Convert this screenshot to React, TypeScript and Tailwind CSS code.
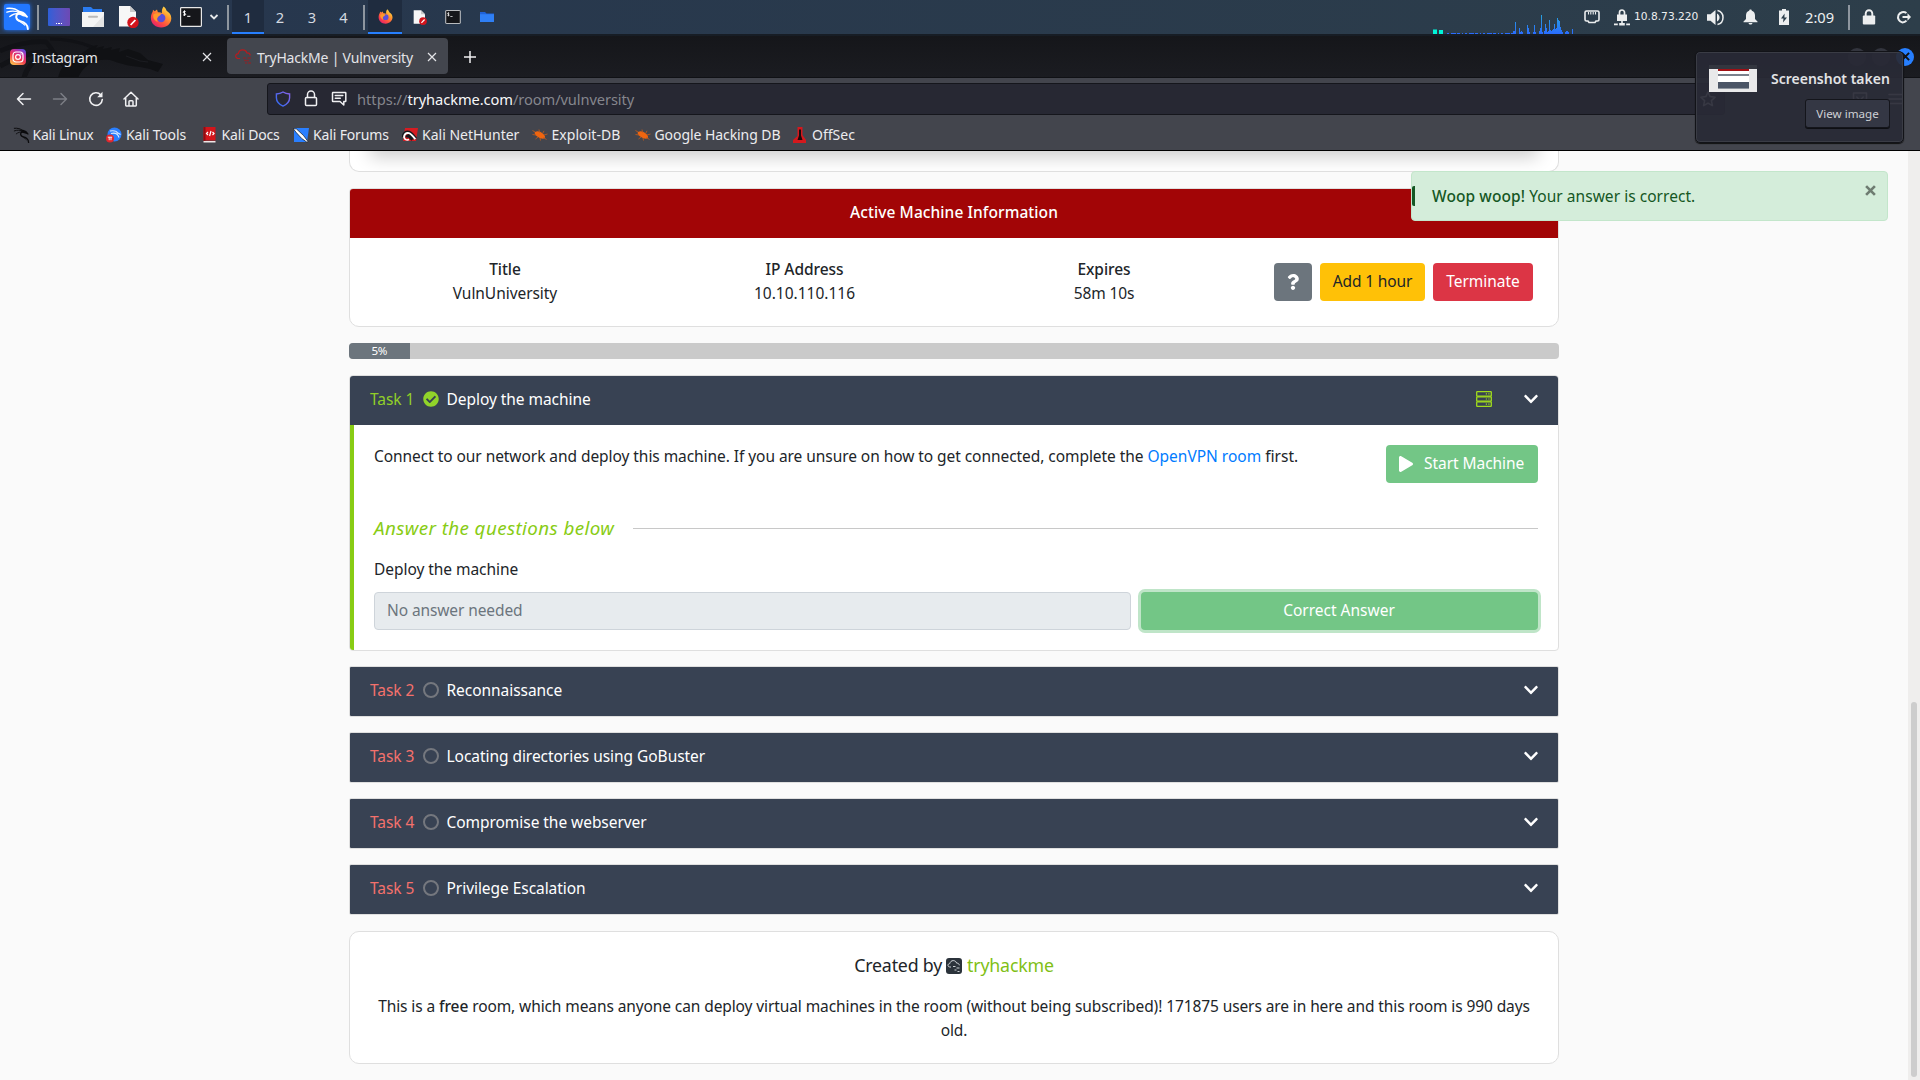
import React from "react";
import { FaCheckCircle, FaChevronDown, FaPlay, FaQuestion } from "react-icons/fa";

/* ---------- desktop panel icons ---------- */

function Dragon({ size, color }: { size: number; color: string }) {
  return (
    <svg width={size} height={size} viewBox="0 0 26 26" className="shrink-0">
      <g fill="none" stroke={color} strokeLinecap="round">
        <path d="M2 3.500C7 3 11.500 4 14.500 6.800" strokeWidth="1.500" />
        <path d="M2 7.500C7 5.800 11 6 15 8" strokeWidth="1.400" />
        <path d="M5 12C7.500 10 11 8.700 15 8.800" strokeWidth="1.300" />
        <path d="M14.500 8.500C10.500 10.500 10.500 15.500 16 16.800C21 18 23.500 20 23.800 25" strokeWidth="2" />
        <path d="M12.500 14.500C14 17.500 18 18 20.500 21" strokeWidth="1.100" />
      </g>
      <path d="M13 5.500c3 .5 6 1.200 8 3l3 3.700-1 1.300-1.800-1.300-2.700-.6c-1.600-.8-3.500-1.400-5.500-1.600z" fill={color} />
    </svg>
  );
}

function Firefox({ size }: { size: number }) {
  return (
    <svg width={size} height={size} viewBox="0 0 22 22" className="shrink-0">
      <defs>
        <linearGradient id="fx-a" x1="0.85" y1="0.05" x2="0.2" y2="0.95">
          <stop offset="0" stopColor="#ffe34a" />
          <stop offset="0.35" stopColor="#ff9a2e" />
          <stop offset="0.7" stopColor="#ff4f3f" />
          <stop offset="1" stopColor="#e5216b" />
        </linearGradient>
      </defs>
      <path
        d="M13.600.4c1.700 1.400 2.600 2.800 3 4.300 2.700 1.700 4.700 4 4.700 7.500 0 5.300-4.500 9.300-10.100 9.300C5.300 21.500.9 17.400.9 12c0-2.700.8-4.700 1.800-6.200l.3-2 1.700 1.500L7 3.600l.9 2.600c1.600-.2 3 .1 4.100.9C11.600 4.600 12.100 2.200 13.600.4z"
        fill="url(#fx-a)"
      />
      <circle cx="11.200" cy="12" r="4.200" fill="#5b4fd8" />
      <path d="M3.500 8.200c2.300-1.300 5.300-1.500 7.600.1-1.200 1.800-2.800 1.800-3.700 3.600-.7 1.400-.3 2.900.7 4.200C4.500 14.800 2.500 11.600 3.500 8.200z" fill="#ff9a2b" />
    </svg>
  );
}

function FileBlocked({ w, h }: { w: number; h: number }) {
  return (
    <svg width={w} height={h} viewBox="0 0 21 22" className="shrink-0">
      <path d="M1 0h11l6 6v14.500H1z" fill="#f7f7f7" />
      <path d="M12 0l6 6h-6z" fill="#c9c9c9" />
      <circle cx="15" cy="16.500" r="5.700" fill="#d3141c" />
      <path d="M12.600 19l4.800-5" stroke="#fff" strokeWidth="1.800" />
    </svg>
  );
}

function Terminal({ w, h }: { w: number; h: number }) {
  return (
    <svg width={w} height={h} viewBox="0 0 22 20" className="shrink-0">
      <rect x="0.600" y="0.600" width="20.800" height="18.800" rx="0.800" fill="#15161a" stroke="#e8e8e8" strokeWidth="1.200" />
      <path d="M5.600 4.600c-1-.6-2.400-.4-2.400.6 0 1.300 2.500.8 2.500 2.100 0 1-1.500 1.200-2.600.5M4.500 3.400v5.400M7.200 9.300h3.200" stroke="#fff" strokeWidth="1" fill="none" />
    </svg>
  );
}

function Folder() {
  return (
    <svg width="14" height="12" viewBox="0 0 14 12" className="shrink-0">
      <path d="M0 1h5l1.500 1.400H14V11H0z" fill="#1f62d8" />
      <path d="M0 3.200h14V11H0z" fill="#2f7ff5" />
    </svg>
  );
}

const PEAKS: [number, number][] = [
  [80, 3], [81, 3], [82, 12], [86, 6], [87, 2], [88, 3], [89, 2], [94, 9], [95, 6], [96, 2], [100, 2], [101, 9], [102, 2],
  [106, 3], [107, 6], [108, 19], [109, 2], [111, 3], [112, 10], [113, 6], [114, 2], [115, 3], [116, 14], [117, 4], [118, 3], [119, 4],
  [120, 5], [121, 10], [122, 5], [123, 6], [124, 16], [125, 14], [126, 13], [127, 7], [128, 4], [129, 2], [132, 2], [133, 3], [134, 3], [135, 2], [139, 5],
];

function CpuGraph() {
  return (
    <svg width="141" height="20" viewBox="0 0 141 20" className="shrink-0">
      <defs>
        <linearGradient id="cpu" x1="0" y1="0" x2="0" y2="20" gradientUnits="userSpaceOnUse">
          <stop offset="0" stopColor="#27a5dd" />
          <stop offset="1" stopColor="#2a6cff" />
        </linearGradient>
      </defs>
      <path d="M0 15.500h4V20H0zM6 16h4v4H6z" fill="#00f5d8" />
      <path d="M14 19.500h66" stroke="#2a6cff" strokeDasharray="2 2 5 1 3 2 1 2" />
      {PEAKS.map(([x, h]) => (
        <rect key={x} x={x} y={20 - h} width="1" height={h} fill="url(#cpu)" />
      ))}
    </svg>
  );
}

function Sep() {
  return <div className="h-[25px] w-[2px] shrink-0 bg-[#8e969f]" />;
}

function TopPanel() {
  return (
    <div className="flex h-[36px] w-full items-start overflow-hidden border-b-2 border-[#171d25] bg-linear-to-r from-[#26364e] to-[#2d3e4a] text-[14.67px] text-[#d5dae0]">
      <div className="flex h-[34px] shrink-0 items-center">
        <div className="ml-[4px] flex h-[26px] w-[26px] items-center justify-center rounded-[2px] bg-[#2277ff] shadow-[0_0_4px_#2277ff]">
          <Dragon size={25} color="#fff" />
        </div>
        <div className="ml-[7px]"><Sep /></div>
        <div className="ml-[9px] flex h-[18px] w-[22px] items-end justify-center rounded-[1px] bg-linear-to-r from-[#2d5fd8] to-[#6d49b4] pb-[2px]">
          <div className="flex gap-px"><i className="h-[1.5px] w-[1.5px] bg-white" /><i className="h-[1.5px] w-[1.5px] bg-white" /><i className="h-[1.5px] w-[1.5px] bg-white" /></div>
        </div>
        <svg width="22" height="20" viewBox="0 0 22 20" className="ml-[12px] shrink-0">
          <path d="M1 0h8l2 2h9v5H1z" fill="#2a7bf0" />
          <path d="M0 5h22v15H0z" fill="#f4f4f4" />
          <path d="M22 8v12H11z" fill="#e4e4e4" />
          <rect x="6" y="8.700" width="10" height="2" rx="1" fill="#b9b9b9" />
        </svg>
        <div className="ml-[14px]"><FileBlocked w={21} h={22} /></div>
        <div className="ml-[11px]"><Firefox size={22} /></div>
        <div className="ml-[8px]"><Terminal w={22} h={20} /></div>
        <svg width="10" height="8" viewBox="0 0 10 8" className="ml-[7px]"><path d="M1.500 2l3.500 3.500L8.500 2" stroke="#e6e8ea" strokeWidth="1.800" fill="none" /></svg>
        <div className="ml-[8px]"><Sep /></div>
        <div className="ml-[3px] flex h-[34px] w-[32px] items-center justify-center border-b-2 border-[#277fff] bg-[#1f2c3f] pt-[1px]">1</div>
        <div className="flex w-[32px] justify-center">2</div>
        <div className="flex w-[32px] justify-center">3</div>
        <div className="flex w-[31px] justify-center">4</div>
        <div className="ml-[4px]"><Sep /></div>
        <div className="ml-[3px] flex h-[34px] w-[34px] items-center justify-center border-b-2 border-[#277fff] bg-[#1f2c3f] pt-[1px]"><Firefox size={15} /></div>
        <div className="ml-[11px]"><FileBlocked w={14} h={15} /></div>
        <div className="ml-[18px]"><Terminal w={16} h={14} /></div>
        <div className="ml-[19px]"><Folder /></div>
      </div>
      <div className="ml-auto flex h-[34px] shrink-0 items-center text-[#eceeef]">
        <div className="flex h-[34px] items-end"><CpuGraph /></div>
        <svg width="16" height="14" viewBox="0 0 16 14" className="ml-[10px]">
          <path d="M2.500 1h11c1 0 1.500.5 1.500 1.500v7c0 1-.5 1.500-1.500 1.500H12l-1 1.500H5L4 11H2.500C1.500 11 1 10.500 1 9.500v-7C1 1.500 1.500 1 2.500 1z" fill="none" stroke="currentColor" strokeWidth="1.600" />
          <path d="M4.500 2v2.500M6.800 2v2.500M9.200 2v2.500M11.500 2v2.500" stroke="currentColor" strokeWidth="1.100" />
        </svg>
        <svg width="16" height="17" viewBox="0 0 16 17" className="ml-[14px]">
          <path d="M5.500 6V3.500a2.500 2.500 0 015 0V6" fill="none" stroke="currentColor" strokeWidth="1.700" />
          <path d="M3 5.500h10V12H3zM7.200 12h1.600v2H7.200zM0 14.500h3.800v1.700H0zM5.200 14h5.600v2.500H5.200zM12.200 14.500H16v1.700h-3.800z" fill="currentColor" />
        </svg>
        <div className="ml-[4px] w-[73px] whitespace-nowrap font-['DejaVu_Sans',sans-serif] text-[10.67px] leading-[16px]">10.8.73.220</div>
        <svg width="17" height="17" viewBox="0 0 17 17">
          <path d="M0 5.200h3.500L8.500 1v15l-5-4.200H0z" fill="currentColor" />
          <path d="M10 4.500c1.700 1 2.500 2.300 2.500 4s-.8 3-2.500 4z" fill="currentColor" />
          <path d="M10.500 1.500c3.500.8 5.500 3.500 5.500 7s-2 6.200-5.500 7" fill="none" stroke="currentColor" strokeWidth="1.500" />
        </svg>
        <svg width="15" height="16" viewBox="0 0 15 16" className="ml-[19px]">
          <path d="M7.500.500c.8 0 1.300.500 1.300 1.200 2.300.7 3.200 2.600 3.200 4.800v3.500l2.500 2.500v.8H.5v-.8L3 10V6.500c0-2.200.9-4.100 3.200-4.800 0-.7.500-1.200 1.300-1.200zM5.500 14h4c-.3 1-1 1.500-2 1.500s-1.700-.5-2-1.500z" fill="currentColor" />
        </svg>
        <svg width="10" height="16" viewBox="0 0 10 16" className="ml-[21px]">
          <path d="M3 0h4v1.500h3V16H0V1.500h3z" fill="currentColor" />
          <path d="M5.600 4.500L2 9.500h2.500l-.5 4 4-5H5.400z" fill="#2c3d4a" />
        </svg>
        <div className="ml-[16px] w-[43px] whitespace-nowrap">2:09</div>
        <Sep />
        <svg width="14" height="16" viewBox="0 0 14 16" className="ml-[12px]">
          <path d="M3.700 7V4.500a3.300 3.300 0 016.600 0V7" fill="none" stroke="currentColor" strokeWidth="1.900" />
          <rect x="0.800" y="6.500" width="12.400" height="9" rx="1" fill="currentColor" />
        </svg>
        <svg width="16" height="14" viewBox="0 0 16 14" className="ml-[20px] mr-[8px]">
          <path d="M10.500 3A5.300 5.300 0 106.500 12.500c1.600 0 3-.7 4-1.800" fill="none" stroke="currentColor" strokeWidth="2" />
          <path d="M6.500 6h5V3.300L15 7l-3.500 3.700V8h-5z" fill="currentColor" />
        </svg>
      </div>
    </div>
  );
}

/* ---------- browser chrome ---------- */

function Cross({ size, color = "#e4e5e8", sw = 1.2 }: { size: number; color?: string; sw?: number }) {
  return (
    <svg width={size} height={size} viewBox="0 0 10 10" className="shrink-0">
      <path d="M1 1l8 8M9 1L1 9" stroke={color} strokeWidth={sw} />
    </svg>
  );
}

function TabBar() {
  return (
    <div className="relative flex h-[42px] items-center border-b border-[#101115] bg-linear-to-b from-[#15161a] to-[#1b1c21] text-[14px] text-[#e3e4e8]">
      <svg width="170" height="42" viewBox="0 0 170 42" className="absolute left-0 top-0">
        <path d="M58 42C60 32 66 25 78 20L92 10l6-1-2 3 8-2-1 3 9-2-1 3 9-2-1 4 9-3 12 4 8 7 15 4-5 8-8-3-10-2c-12-1-22-4-30-7-14-2-26 4-32 18z" fill="#101114" />
        <path d="M0 15C16 8 32 5 46 6c8 8 10 18 20 25" fill="none" stroke="#111216" strokeWidth="4.500" />
        <path d="M0 30c14-8 28-13 44-14-10 8-18 16-20 26" fill="none" stroke="#121317" strokeWidth="5" />
        <path d="M50 3c16 0 30 3 42 8" fill="none" stroke="#111216" strokeWidth="3" />
        <path d="M126 20l14 5 8 1" fill="none" stroke="#1b1c21" strokeWidth="1" />
      </svg>
      <div className="relative flex h-full w-[227px] items-center pl-[10px]">
        <svg width="16" height="16" viewBox="0 0 16 16" className="shrink-0">
          <defs>
            <linearGradient id="ig" x1="0.200" y1="1" x2="0.800" y2="0">
              <stop offset="0" stopColor="#fdc04c" /><stop offset="0.450" stopColor="#f0374f" /><stop offset="0.750" stopColor="#c22fa5" /><stop offset="1" stopColor="#5b4fe0" />
            </linearGradient>
          </defs>
          <rect width="16" height="16" rx="4" fill="url(#ig)" />
          <rect x="3" y="3" width="10" height="10" rx="3" fill="none" stroke="#fff" strokeWidth="1.200" />
          <circle cx="8" cy="8" r="2.400" fill="none" stroke="#fff" strokeWidth="1.200" />
          <circle cx="11" cy="5" r="0.700" fill="#fff" />
        </svg>
        <span className="ml-[6px] w-[170px] pt-[1px] tracking-[-0.29px]">Instagram</span>
        <Cross size={10} />
      </div>
      <div className="relative -mt-px flex h-[36px] w-[221px] items-center rounded-[4px] bg-[#43464e] pl-[8px] pt-px">
        <svg width="17" height="16" viewBox="0 0 17 16" className="shrink-0">
          <path d="M5 9.500H3.500C1.800 9.500.7 8.500.7 7S1.900 4.500 3.400 4.600C3.800 2.300 5.500.9 7.700.9c2 0 3.500 1 4.100 2.900 2 0 3.400 1 3.400 2.800" fill="none" stroke="#b71c1f" strokeWidth="1.200" />
          <path d="M8 9h3M12.500 9H16M9 11.500h5M10 14h2M13 14h3" stroke="#7d2b30" strokeWidth="1.300" />
        </svg>
        <span className="ml-[5px] w-[170px] whitespace-nowrap pt-[1px] tracking-[-0.2px]">TryHackMe | Vulnversity</span>
        <Cross size={10} />
      </div>
      <svg width="12" height="12" viewBox="0 0 12 12" className="ml-[16px]"><path d="M6 0v12M0 6h12" stroke="#f0f0f2" strokeWidth="1.500" /></svg>
      <div className="ml-auto mr-[6px] flex gap-[6px]">
        <div className="h-[18px] w-[18px] rounded-full bg-[#33353e]" />
        <div className="h-[18px] w-[18px] rounded-full bg-[#33353e]" />
        <div className="flex h-[18px] w-[18px] items-center justify-center rounded-full bg-[#277fff]"><Cross size={9} color="#111" sw={2.2} /></div>
      </div>
    </div>
  );
}

function Toolbar() {
  const line = { fill: "none", stroke: "currentColor", strokeWidth: 1.5, strokeLinecap: "round" as const, strokeLinejoin: "round" as const };
  return (
    <div className="flex h-[41px] items-center bg-[#43454d] text-[#f0f0f2]">
      <svg width="16" height="16" viewBox="0 0 16 16" className="ml-[16px]"><path d="M14.500 8H1.500M7 2.500L1.500 8 7 13.500" {...line} /></svg>
      <svg width="16" height="16" viewBox="0 0 16 16" className="ml-[20px] text-[#7c7e85]"><path d="M1.500 8h13M9 2.500L14.500 8 9 13.500" {...line} /></svg>
      <svg width="16" height="16" viewBox="0 0 16 16" className="ml-[20px]">
        <path d="M12.800 4A6.300 6.300 0 1014.300 8.500" {...line} strokeWidth={1.600} />
        <path d="M14.500.8v5.400H9.200z" fill="currentColor" />
      </svg>
      <svg width="16" height="16" viewBox="0 0 16 16" className="ml-[19px]">
        <path d="M1 8L8 1.200 15 8M2.700 7v7.300c0 .3.300.6.600.6h9.400c.3 0 .6-.3.600-.6V7M6 14.700V10.600c0-.5.400-.9.900-.9h2.200c.5 0 .9.400.9.900v4.100" {...line} />
      </svg>
      <div className="ml-[128px] flex h-[32px] w-[1458px] items-center rounded-[3px] border border-[#15161c] bg-[#272833] text-[14.67px] text-[#85868d]">
        <svg width="16" height="16" viewBox="0 0 16 16" className="ml-[7px]">
          <defs><linearGradient id="sh" x1="0" y1="1" x2="1" y2="0"><stop offset="0" stopColor="#2c6bf2" /><stop offset="1" stopColor="#8a63e8" /></linearGradient></defs>
          <path d="M8 1C6 2.300 3.800 2.900 1.400 3v3.800c0 3.700 2.500 6.500 6.600 8.300 4.100-1.800 6.600-4.600 6.600-8.300V3C12.200 2.900 10 2.300 8 1z" fill="none" stroke="url(#sh)" strokeWidth="1.400" />
        </svg>
        <svg width="14" height="17" viewBox="0 0 14 17" className="ml-[13px] text-[#f0f0f2]">
          <path d="M3.500 7.500V4.500a3.500 3.500 0 017 0v3" {...line} />
          <rect x="1.500" y="7.500" width="11" height="8" rx="1" {...line} />
        </svg>
        <svg width="16" height="16" viewBox="0 0 16 16" className="ml-[13px] text-[#f0f0f2]">
          <path d="M1.700 1.500h12.600c.3 0 .5.200.5.500v8c0 .3-.2.500-.5.500h-1.500V14L9 10.500H2c-.3 0-.5-.2-.5-.5V2M4.300 4.500h7.500M4.300 7.300h5" {...line} />
        </svg>
        <div className="ml-[10px] flex pt-px">
          <span className="w-[50.500px]">https://</span>
          <span className="w-[105.500px] tracking-[-0.08px] text-[#f7f7f9]">tryhackme.com</span>
          <span className="tracking-[-0.1px]">/room/vulnversity</span>
        </div>
        <svg width="16" height="16" viewBox="0 0 16 16" className="ml-auto mr-[8px] text-[#f0f0f2]"><path d="M8 1l2.100 4.600 5 .6-3.700 3.400 1 5L8 12.100l-4.400 2.500 1-5L.9 6.200l5-.6z" {...line} /></svg>
      </div>
      <svg width="16" height="16" viewBox="0 0 16 16" className="ml-auto"><path d="M1.500 2h13v5.500a6.500 6.500 0 01-13 0zM4.800 6L8 9.200 11.200 6" {...line} /></svg>
      <svg width="16" height="16" viewBox="0 0 16 16" className="ml-[20px] mr-[16px]"><path d="M1 3.500h14M1 8h14M1 12.500h14" {...line} /></svg>
    </div>
  );
}

const Bug = () => (
  <svg width="16" height="16" viewBox="0 0 16 16" className="shrink-0">
    <path d="M3 5c2-1.500 5-1 7.500 1.200C13 8.200 13.600 10 12.600 11.300c-1.500 1-4.600.2-7-1.500C3 8 2 6.300 3 5z" fill="#f0650f" />
    <path d="M.5 3.500L3 5M.5 7.500L4 8M3.500 12l2.500-2M7 2.500l.5 3M12 3.800l-1.500 3M12 8l3.500-1M11.500 10.500l3 2M8.500 13.500l-.5-2.500" stroke="#b9591f" strokeWidth="0.900" />
  </svg>
);

const BOOKMARKS: { label: string; cls: string; icon: React.ReactNode }[] = [
  { label: "Kali Linux", cls: "w-[73.5px] tracking-[-0.2px]", icon: <Dragon size={17} color="#0b0b0d" /> },
  {
    label: "Kali Tools", cls: "w-[75.5px] tracking-[-0.15px]",
    icon: (
      <svg width="16" height="16" viewBox="0 0 16 16" className="shrink-0">
        <circle cx="8.500" cy="7.500" r="7" fill="#2a7fff" />
        <path d="M4 4c4-.8 7 .3 8 2.500M5 6.500c4-1 7 .5 8 4M12 6l2.500 1.500" stroke="#dbe9ff" strokeWidth="1.100" fill="none" />
        <circle cx="4" cy="11.500" r="4" fill="#e0262c" />
        <path d="M1.800 10.200h4.400M3.200 10.200v3M5 10.200v3" stroke="#fff" strokeWidth="0.900" />
      </svg>
    ),
  },
  {
    label: "Kali Docs", cls: "w-[71.5px] tracking-[-0.15px]",
    icon: (
      <svg width="16" height="16" viewBox="0 0 16 16" className="shrink-0">
        <path d="M1.500 0h12v13.500h-12z" fill="#d3151b" /><path d="M1.500 0h2v14h-2z" fill="#8e0e13" /><path d="M1.500 14h12v1.500h-12z" fill="#efe7e7" />
        <path d="M6 5L4.500 6.500 6 8M10.500 5L12 6.500l-1.500 1.500M9 4L7.600 9" stroke="#fff" strokeWidth="1.200" fill="none" />
      </svg>
    ),
  },
  {
    label: "Kali Forums", cls: "w-[89px] tracking-[-0.15px]",
    icon: (
      <svg width="16" height="16" viewBox="0 0 16 16" className="shrink-0">
        <path d="M1 1h15l-2 14H1z" fill="#2a7fff" />
        <path d="M0 1.500L3.500 2l7 6.500 4.500 6-1 .8-5.500-4-5-5.500z" fill="#fff" stroke="#16181d" strokeWidth="0.700" />
      </svg>
    ),
  },
  {
    label: "Kali NetHunter", cls: "w-[109.5px]",
    icon: (
      <svg width="16" height="16" viewBox="0 0 16 16" className="shrink-0">
        <path d="M3 1h13l-2 13H1z" fill="#d61c22" />
        <path d="M1.500 10c0-3.500 2.500-5.500 5.500-4.600 2.500.8 4 3 6.500 6.400M5 10.500c.3-1.600 1.500-2 2.800-1.200l2.800 3.400" stroke="#16181d" strokeWidth="3.400" fill="none" />
        <path d="M2 10.500c0-3.500 2.200-5.200 5-4.400 2.300.7 4 3 6.300 6" stroke="#fff" strokeWidth="2" fill="none" />
        <path d="M2 10c.5 2.500 2.500 3.500 5 2.500" stroke="#fff" strokeWidth="1.500" fill="none" />
      </svg>
    ),
  },
  { label: "Exploit-DB", cls: "w-[83px] tracking-[0.05px]", icon: <Bug /> },
  { label: "Google Hacking DB", cls: "w-[137.5px] tracking-[-0.07px]", icon: <Bug /> },
  {
    label: "OffSec", cls: "w-[60px]",
    icon: (
      <svg width="16" height="16" viewBox="0 0 16 16" className="shrink-0">
        <path d="M5.500 0h5v8l3.500 5v3H1v-3l4.500-4z" fill="#d4181d" />
        <path d="M7 2.500h2v6l1.500 4.500h-5L7 8.500z" fill="#1c0b0c" />
      </svg>
    ),
  },
];

function BookmarksBar() {
  return (
    <div className="flex h-[32px] items-center border-b border-black bg-[#43454d] pl-[12.5px] text-[14px] text-[#ececef]">
      {BOOKMARKS.map((b) => (
        <div key={b.label} className="flex items-center">
          <div className="flex w-[20px] items-center">{b.icon}</div>
          <span className={"whitespace-nowrap leading-[20px] " + b.cls}>{b.label}</span>
        </div>
      ))}
    </div>
  );
}

function ScreenshotNotice() {
  return (
    <div className="absolute left-[1695px] top-[51px] flex h-[92px] w-[209px] flex-col rounded-[5px] border border-[#121318] bg-[#292a36]/93 pl-[13px] pr-[13px] pt-[13px] shadow-[inset_0_0_0_1px_#3a3c45,0_1px_1px_#111]">
      <div className="flex items-start">
        <div className="flex h-[27px] w-[48px] shrink-0 flex-col items-center bg-[#e9e9ea]">
          <div className="h-[4px] w-full bg-[#33363f]" />
          <div className="h-[2px] w-[31px] bg-[#a01015]" />
          <div className="h-[3px] w-[31px] bg-white" />
          <div className="h-[2px] w-[31px] bg-[#7a818c]" />
          <div className="h-[6px] w-[31px] bg-white" />
          <div className="flex h-[7px] w-[31px] flex-col gap-[0.5px] bg-[#8c939d]"><i className="h-[1.500px] bg-[#4b5566]" /><i className="h-[1.500px] bg-[#4b5566]" /><i className="h-[1.500px] bg-[#4b5566]" /></div>
        </div>
        <div className="ml-[14px] mt-[4px] whitespace-nowrap text-[14px] font-semibold leading-[20px] text-[#e2e3e5]">Screenshot taken</div>
      </div>
      <div className="ml-auto mt-[7px] flex h-[29px] w-[85px] items-center justify-center rounded-[3px] border border-[#14151b] bg-[#343744] pt-px text-[11.6px] leading-[16px] text-[#ced0d5] shadow-[0_1px_0_#0e0f13]">View image</div>
    </div>
  );
}

/* ---------- web page ---------- */

function RackIcon() {
  return (
    <svg width="16" height="16" viewBox="0 0 16 16">
      <g fill="none" stroke="#a1dd1c" strokeWidth="1.300">
        <rect x="0.700" y="0.700" width="14.600" height="4.400" rx="0.600" />
        <rect x="0.700" y="5.800" width="14.600" height="4.400" rx="0.600" />
        <rect x="0.700" y="10.900" width="14.600" height="4.400" rx="0.600" />
      </g>
      <path d="M9.800 2.900h1.200M12.300 2.900h1.200M9.800 8h1.200M12.300 8h1.200M9.800 13.100h1.200M12.300 13.100h1.200" stroke="#a1dd1c" strokeWidth="1.200" />
    </svg>
  );
}

function TaskHeader({ n, title, done = false }: { n: number; title: string; done?: boolean }) {
  return (
    <div className="flex h-[49px] items-center bg-[#384253] pb-[3px] pl-[20px] pr-[20px] text-white">
      <span className={"w-[52.500px] " + (done ? "text-[#91cf28]" : "text-[#f4716c]")}>Task {n}</span>
      <div className="w-[24px]">
        {done ? <FaCheckCircle size={16} className="text-[#91d42a]" /> : <div className="h-[16px] w-[16px] rounded-full border-2 border-[#74777e]" />}
      </div>
      <span className="mr-auto">{title}</span>
      {done && <RackIcon />}
      <FaChevronDown size={16} className="ml-[32px] w-[14px]" />
    </div>
  );
}

function Page() {
  return (
    <div className="relative flex h-[929px] overflow-hidden bg-[#fafafa] text-[15.5px] leading-[24px] tracking-[-0.05px] text-[#212529]">
      <div className="ml-[349px] flex w-[1210px] flex-col">
        <div className="h-[21px] shrink-0 overflow-hidden rounded-b-[10px] border border-t-0 border-[#dfdfdf] bg-white px-[26px]">
          <div className="-mt-[20px] h-[20px] shadow-[0_0_18px_6px_rgba(0,0,0,0.2)]" />
        </div>

        <div className="mt-[16px] h-[139px] shrink-0 overflow-hidden rounded-b-[10px] rounded-t-[4px] border border-[#dfdfdf] bg-white">
          <div className="flex h-[49px] items-center justify-center bg-[#a20506] pb-[3px] font-medium tracking-[0.08px] text-white">Active Machine Information</div>
          <div className="flex pl-[5px] pt-[19px] text-center">
            <div className="w-[300px]"><div className="font-medium">Title</div><div>VulnUniversity</div></div>
            <div className="w-[299px]"><div className="font-medium">IP Address</div><div className="tracking-[0]">10.10.110.116</div></div>
            <div className="w-[300px]"><div className="font-medium">Expires</div><div className="tracking-[-0.15px]">58m 10s</div></div>
            <div className="ml-[20px] mt-[6px] flex gap-[8px]">
              <div className="flex h-[38px] w-[38px] items-center justify-center rounded-[4px] bg-[#6c757d] pb-px text-white"><FaQuestion size={16} /></div>
              <div className="flex h-[38px] w-[105px] items-center justify-center rounded-[4px] bg-[#ffc107] pb-[2px] tracking-[-0.15px]">Add 1 hour</div>
              <div className="flex h-[38px] w-[100px] items-center justify-center rounded-[4px] bg-[#dc3545] pb-[2px] text-white">Terminate</div>
            </div>
          </div>
        </div>

        <div className="mt-[16px] flex h-[16px] shrink-0 overflow-hidden rounded-[4px] bg-[#cacaca]">
          <div className="flex w-[60.5px] items-center justify-center bg-[#6c757d] text-[11.6px] leading-[16px] tracking-[-0.3px] text-white">5%</div>
        </div>

        <div className="mt-[16px] h-[276px] shrink-0 overflow-hidden rounded-[4px] border border-[#dfdfdf] bg-white">
          <TaskHeader n={1} title="Deploy the machine" done />
          <div className="flex h-[225px] flex-col border-l-4 border-[#88cc14] pl-[20px] pr-[20px]">
            <div className="mt-[19px] flex h-[39px] items-start">
              <p className="whitespace-nowrap tracking-[-0.06px]">
                Connect to our network and deploy this machine. If you are unsure on how to get connected, complete the <span className="tracking-[0]"><span className="text-[#007bff]">OpenVPN room</span> first.</span>
              </p>
              <div className="ml-auto mt-[1px] flex h-[38px] w-[152px] items-center rounded-[4px] bg-[#73c686] pl-[13px] text-white">
                <FaPlay size={16} className="w-[14px]" />
                <span className="ml-[11px] whitespace-nowrap pb-[2px]">Start Machine</span>
              </div>
            </div>
            <div className="mt-[33px] flex h-[24px] items-center text-[18.8px] italic tracking-[0.4px] text-[#88cc14]">
              <span className="w-[259px] whitespace-nowrap">Answer the questions below</span>
              <div className="mt-[1px] h-px flex-1 bg-[#c8c8c8]" />
            </div>
            <div className="mt-[17px]">Deploy the machine</div>
            <div className="mt-[11px] flex gap-[10px]">
              <div className="h-[38px] w-[757px] rounded-[4px] border border-[#ced4da] bg-[#e7ebee] pl-[12px] pt-[5px] tracking-[-0.1px] text-[#6c757d]">No answer needed</div>
              <div className="flex h-[38px] w-[397px] items-center justify-center rounded-[4px] bg-[#73c686] pb-[2px] pr-[1px] tracking-[0] text-white shadow-[0_0_0_3px_#bfe5c8]">Correct Answer</div>
            </div>
          </div>
        </div>

        {["Reconnaissance", "Locating directories using GoBuster", "Compromise the webserver", "Privilege Escalation"].map((t, i) => (
          <div key={t} className="mt-[15px] h-[51px] shrink-0 overflow-hidden rounded-[2px] border border-[#dfdfdf]">
            <TaskHeader n={i + 2} title={t} />
          </div>
        ))}

        <div className="mt-[16px] h-[133px] shrink-0 rounded-[10px] border border-[#dfdfdf] bg-white pt-[21px] text-center">
          <div className="flex h-[24px] items-center justify-center text-[17.8px] tracking-[-0.2px]">
            Created by
            <svg width="16" height="16" viewBox="0 0 16 16" className="ml-[4px] mr-[5px] mt-[2px]">
              <rect width="16" height="16" rx="3" fill="#2b333b" />
              <path d="M5 9H4C2.800 9 2 8.300 2 7.300s.8-1.700 1.800-1.700C4.200 3.700 5.500 2.600 7.200 2.600c1.700 0 2.900.9 3.400 2.500 1.600 0 2.700.8 2.700 2.200M7 8.500h2.500M10.500 10h3M8.500 12h2M11.500 13.500h2" fill="none" stroke="#dfe3e6" strokeWidth="0.900" />
            </svg>
            <span className="text-[#7fbf16]">tryhackme</span>
          </div>
          <div className="mt-[17px] tracking-[-0.1px]">
            <div className="whitespace-nowrap">
              This is a <b className="font-medium">free</b> room, which means anyone can deploy virtual machines in the room (without being subscribed)! 171875 users are in here and this room is 990 days
            </div>
            <div>old.</div>
          </div>
        </div>
      </div>

      <div className="ml-auto flex w-[12px] flex-col items-center bg-[#efeeed]">
        <div className="mt-[551px] h-[375px] w-[6px] rounded-[3px] bg-[#cdcdcd]" />
      </div>

      <div className="absolute left-[1411px] top-[20px] flex h-[50px] w-[477px] items-center rounded-[4px] border border-[#c3e6cb] bg-[#d4edda] text-[#155724]">
        <div className="h-[20px] w-[3px] rounded-l-[2px] bg-[#155724]" />
        <div className="ml-[17px] tracking-[0.04px]"><b className="font-medium tracking-[0.1px]">Woop woop!</b> Your answer is correct.</div>
        <div className="mb-[11px] ml-auto mr-[11px]"><Cross size={11} color="#6e7c71" sw={2.4} /></div>
      </div>
    </div>
  );
}

export default function App() {
  return (
    <div className="relative h-[1080px] w-[1920px] overflow-hidden font-['Noto_Sans',sans-serif]">
      <TopPanel />
      <TabBar />
      <Toolbar />
      <BookmarksBar />
      <Page />
      <ScreenshotNotice />
    </div>
  );
}
